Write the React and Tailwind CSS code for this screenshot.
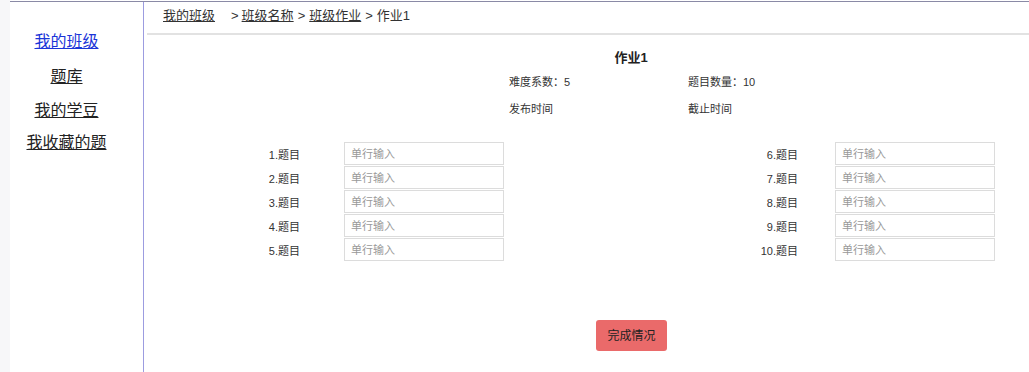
const font = { fontFamily: '"Liberation Sans", "Noto Sans CJK SC", sans-serif' };

const left = [1, 2, 3, 4, 5];
const right = [6, 7, 8, 9, 10];

function QuestionColumn({ items, labelWidth, gap }) {
  return (
    <div className="flex flex-col">
      {items.map((n) => (
        <div key={n} className="mb-[1px] flex h-[23px] items-center">
          <span className={`${labelWidth} pt-[3px] text-right text-[11px] leading-[16px] text-[#333]`}>{n}.题目</span>
          <input
            placeholder="单行输入"
            className={`${gap} h-[23px] w-[160px] border border-[#dcdcdc] px-[6px] text-[11px] text-[#333] outline-none placeholder:text-[#999]`}
          />
        </div>
      ))}
    </div>
  );
}

export default function App() {
  return (
    <div className="flex h-[372px] w-full bg-white" style={font}>
      <div className="w-[10px] shrink-0 bg-[#f7f7f9]" />
      <div className="flex flex-1 flex-col pt-[1px]">
        <div className="flex flex-1 border-t border-[#8a8aa6]">
          <aside className="flex w-[134px] shrink-0 flex-col items-center border-r border-[#9c9ce0] pr-[20px] pt-[23px] text-[16px] leading-[34px]">
            <a className="text-[#1a35d8] underline">我的班级</a>
            <a className="mt-[1px] text-[#222] underline">题库</a>
            <a className="text-[#222] underline">我的学豆</a>
            <a className="-mt-[2px] text-[#222] underline">我收藏的题</a>
          </aside>

          <main className="flex flex-1 flex-col">
            <nav className="ml-[3px] flex h-[33px] items-center border-b-2 border-[#e2e2e2] pb-[4px] pl-[16px] text-[13px] text-[#333]">
              <span className="underline">我的班级</span>
              <span className="ml-[16px] mr-[3px]">&gt;</span>
              <span className="underline">班级名称</span>
              <span className="mx-[4px]">&gt;</span>
              <span className="underline">班级作业</span>
              <span className="mx-[4px]">&gt;</span>
              <span>作业1</span>
            </nav>

            <div className="ml-[365px] mt-[15px] w-[260px] text-[11px] leading-[16px] text-[#333]">
              <h1 className="h-[16px] w-[244px] text-center text-[13px] font-bold text-[#222]">作业1</h1>
              <div className="mt-[8px] flex h-[16px] whitespace-nowrap">
                <span className="w-[179px]">难度系数：5</span>
                <span>题目数量：10</span>
              </div>
              <div className="mt-[11px] flex h-[16px] whitespace-nowrap">
                <span className="w-[179px]">发布时间</span>
                <span>截止时间</span>
              </div>
            </div>

            <div className="mt-[25px] flex">
              <div className="ml-[86px]">
                <QuestionColumn items={left} labelWidth="w-[70px]" gap="ml-[44px]" />
              </div>
              <div className="ml-[218px]">
                <QuestionColumn items={right} labelWidth="w-[76px]" gap="ml-[37px]" />
              </div>
            </div>

            <div className="mt-[58px] flex">
              <button className="ml-[452px] h-[31px] w-[71px] rounded-[3px] bg-[#ea6a6a] text-[12px] text-[#222]">
                完成情况
              </button>
            </div>
          </main>
        </div>
      </div>
    </div>
  );
}
